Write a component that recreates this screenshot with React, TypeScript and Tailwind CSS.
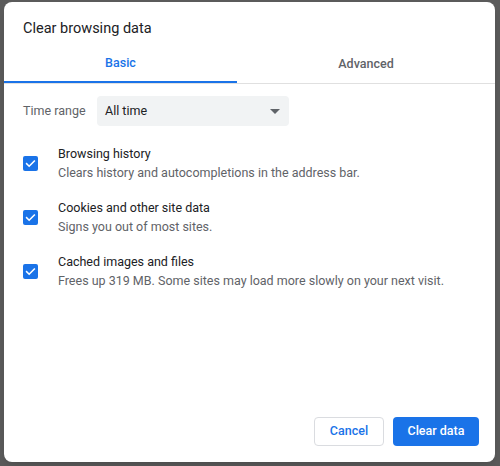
import type { FC } from "react";

const items = [
	{
		title: "Browsing history",
		desc: "Clears history and autocompletions in the address bar.",
	},
	{
		title: "Cookies and other site data",
		desc: "Signs you out of most sites.",
	},
	{
		title: "Cached images and files",
		desc: "Frees up 319 MB. Some sites may load more slowly on your next visit.",
	},
];

const CheckBox: FC = () => (
	<span className="flex h-[15px] w-[15px] shrink-0 items-center justify-center rounded-[2px] bg-[#1a73e8]">
		<svg viewBox="0 0 24 24" className="h-[13px] w-[13px]" fill="none">
			<path
				d="M5 12.5l4.5 4.5L19 7.5"
				stroke="white"
				strokeWidth="3"
				strokeLinecap="square"
			/>
		</svg>
	</span>
);

export default function App() {
	return (
		<div
			className="h-[466px] w-[500px] overflow-hidden bg-[#5b5b5b] pl-[4px] pt-[2px]"
			style={{ fontFamily: "Roboto, 'Liberation Sans', sans-serif" }}
		>
			<div className="flex h-[460px] w-[491px] flex-col rounded-lg bg-white shadow-lg">
				<h1 className="pl-[19px] pt-[17px] text-[14.5px] leading-5 text-[#202124]">
					Clear browsing data
				</h1>
				<div className="mt-[7px] flex h-[38px] border-b border-[#e0e0e0]">
					<div className="flex w-[233px] items-center justify-center border-b-2 border-[#1a73e8] text-[12.5px] font-medium text-[#1a73e8]">
						Basic
					</div>
					<div className="flex flex-1 items-center justify-center text-[12.5px] font-medium text-[#5f6368]">
						Advanced
					</div>
				</div>
				<div className="mt-[12px] flex items-center pl-[19px]">
					<span className="w-[74px] text-[12.5px] text-[#5f6368]">Time range</span>
					<div className="flex h-[30px] w-[192px] items-center justify-between rounded bg-[#f1f3f4] pl-2 pr-[9px] text-[12.5px] text-[#202124]">
						<span>All time</span>
						<svg viewBox="0 0 10 5" className="h-[5px] w-[10px]">
							<path d="M0 0h10L5 5z" fill="#5f6368" />
						</svg>
					</div>
				</div>
				<div className="mt-[18px] flex flex-col gap-[16px]">
					{items.map((it) => (
						<div key={it.title} className="flex items-center pl-[19px]">
							<CheckBox />
							<div className="ml-[20px] flex flex-col text-[12.5px] leading-[19px]">
								<span className="text-[#202124]">{it.title}</span>
								<span className="text-[#5f6368]">{it.desc}</span>
							</div>
						</div>
					))}
				</div>
				<div className="mt-auto flex justify-end gap-[9px] pb-[16px] pr-[16px]">
					<button className="h-[29px] w-[70px] rounded border border-[#dadce0] bg-white text-[12.5px] font-medium text-[#1a73e8]">
						Cancel
					</button>
					<button className="h-[29px] w-[86px] rounded bg-[#1a73e8] text-[12.5px] font-medium text-white">
						Clear data
					</button>
				</div>
			</div>
		</div>
	);
}
